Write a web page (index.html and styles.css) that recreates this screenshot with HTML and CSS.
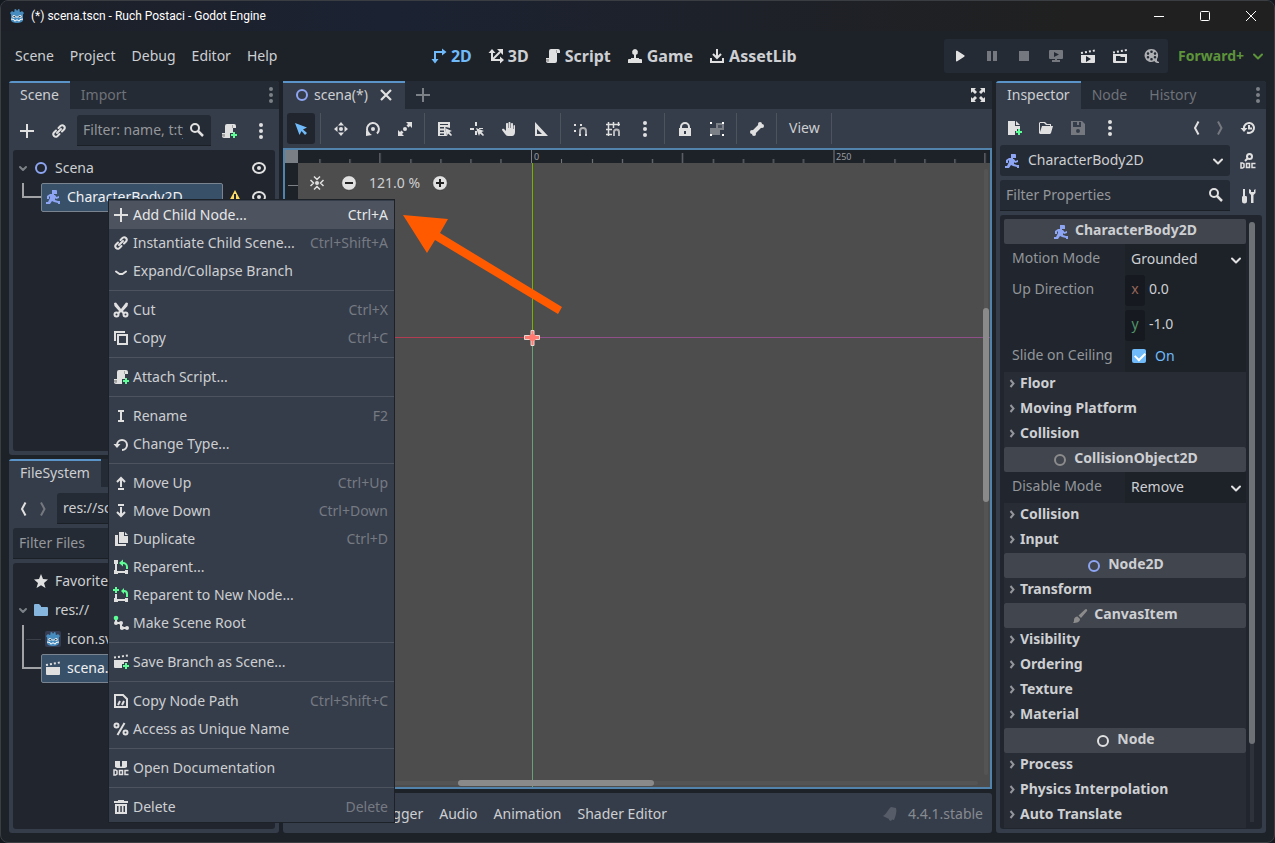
FILE: index.html
```
<!DOCTYPE html>
<html lang="en">

<head>
    <meta charset="UTF-8">
    <meta name="viewport" content="width=device-width, initial-scale=1.0">
    <title>(*) scena.tscn - Ruch Postaci - Godot Engine</title>
    <link rel="stylesheet" href="styles.css">
</head>

<body>
    <!-- Icon set -->
    <svg class="sprite" aria-hidden="true">
        <symbol id="godot" viewBox="0 0 16 16">
            <path fill="#478cbf" d="M1 5l2-2 1.500 1 1-.6L5.400 1.500 7 1l.7 1.600h.8L9.200 1l1.500.5-.1 1.900 1 .6L13 3l2 2-1 1.500V12c0 2-3 3-6 3s-6-1-6-3V6.500z" />
            <circle cx="5" cy="8.500" r="1.600" fill="#fff" /><circle cx="11" cy="8.500" r="1.600" fill="#fff" />
            <circle cx="5.200" cy="8.600" r=".9" fill="#414042" /><circle cx="10.800" cy="8.600" r=".9" fill="#414042" />
            <path fill="none" stroke="#fff" d="M8 8v2M2 11l3 .5.5 1.500h1l.5-1h2l.5 1h1l.5-1.500 3-.5" />
        </symbol>
        <symbol id="add" viewBox="0 0 16 16"><path fill="currentColor" d="M7 1v6H1v2h6v6h2V9h6V7H9V1z" /></symbol>
        <symbol id="link" viewBox="0 0 16 16"><path fill="none" stroke="currentColor" stroke-width="2" stroke-linecap="round" d="M6 10l4-4M7.500 5l2.200-2.200a2.500 2.500 0 0 1 3.500 3.500L11 8.500M8.500 11l-2.200 2.200a2.500 2.500 0 0 1-3.500-3.500L5 7.500" /></symbol>
        <symbol id="search" viewBox="0 0 16 16"><circle cx="6" cy="6" r="4" fill="none" stroke="currentColor" stroke-width="2" /><path stroke="currentColor" stroke-width="2.500" d="M9 9l5 5" /></symbol>
        <symbol id="script" viewBox="0 0 16 16"><path fill="currentColor" d="M6 1a2 2 0 0 0-2 2v7H1v3a2 2 0 0 0 2 2h7a2 2 0 0 0 2-2V5h3V3a2 2 0 0 0-2-2z" /><path fill="#00000045" d="M1 11h3v2a1 1 0 0 1-2 0H1zM11 2h1v3h-1z" /></symbol>
        <symbol id="script-add" viewBox="0 0 16 16"><path fill="currentColor" d="M6 1a2 2 0 0 0-2 2v7H1v3a2 2 0 0 0 2 2h6v-5h3V5h3V3a2 2 0 0 0-2-2z" /><path fill="#00000045" d="M1 11h3v2a1 1 0 0 1-2 0H1zM11 2h1v3h-1z" /><path fill="#5fff97" d="M12 9v2h-2v2h2v2h2v-2h2v-2h-2V9z" /></symbol>
        <symbol id="dots" viewBox="0 0 16 16"><g fill="currentColor"><circle cx="8" cy="2" r="2" /><circle cx="8" cy="8" r="2" /><circle cx="8" cy="14" r="2" /></g></symbol>
        <symbol id="ring" viewBox="0 0 16 16"><circle cx="8" cy="8" r="5" fill="none" stroke="currentColor" stroke-width="2" /></symbol>
        <symbol id="body2d" viewBox="0 0 16 16"><path fill="currentColor" d="M7 1h4a1 1 0 0 1 1 1v3H9v1h1l1.500 2L14 7v2l-3 1-1-1v2l3 1h2v3h-2v-1l-4-1-2-1-2 3H1v-2h2l2-4V7L4 8v2H2V7l3-2h2z" /></symbol>
        <symbol id="eye" viewBox="0 0 16 16"><ellipse cx="8" cy="8" rx="6" ry="5" fill="none" stroke="currentColor" stroke-width="2" /><circle cx="8" cy="8" r="2" fill="currentColor" /></symbol>
        <symbol id="warning" viewBox="0 0 16 16"><path fill="#ffdd65" d="M8 1l7 13H1z" /><path fill="#21262e" d="M7 5h2v5H7zM7 11h2v2H7z" /></symbol>
        <symbol id="down" viewBox="0 0 16 16"><path fill="none" stroke="currentColor" stroke-width="2" stroke-linecap="round" stroke-linejoin="round" d="M4 6.500l4 4 4-4" /></symbol>
        <symbol id="fold" viewBox="0 0 16 16"><path fill="none" stroke="currentColor" stroke-width="2" stroke-linecap="round" stroke-linejoin="round" d="M5 6l3 3 3-3" /></symbol>
        <symbol id="expand" viewBox="0 0 16 16"><path fill="none" stroke="currentColor" stroke-width="2" stroke-linecap="round" stroke-linejoin="round" d="M3 8.500l3.500 2.500h3L13 8.500" /></symbol>
        <symbol id="right" viewBox="0 0 16 16"><path fill="none" stroke="currentColor" stroke-width="2" d="M6.500 5l3 3.500-3 3.500" /></symbol>
        <symbol id="back" viewBox="0 0 16 16"><path fill="none" stroke="currentColor" stroke-width="2" d="M10.500 1.500L7 8l3.500 6.500" /></symbol>
        <symbol id="forward" viewBox="0 0 16 16"><path fill="none" stroke="currentColor" stroke-width="2" d="M6 1.500L9.500 8 6 14.500" /></symbol>
        <symbol id="close" viewBox="0 0 16 16"><path stroke="currentColor" stroke-width="2.200" d="M3 3l10 10M13 3L3 13" /></symbol>
        <symbol id="fullscreen" viewBox="0 0 16 16"><path fill="currentColor" d="M1 1h5L4.500 2.500 7 5 5 7 2.500 4.500 1 6zM15 1v5l-1.500-1.500L11 7 9 5l2.500-2.500L10 1zM1 15v-5l1.500 1.500L5 9l2 2-2.500 2.500L6 15zM15 15h-5l1.500-1.500L9 11l2-2 2.500 2.500L15 10z" /></symbol>
        <symbol id="ws2d" viewBox="0 0 16 16"><path fill="none" stroke="currentColor" stroke-width="2" d="M4 13V4h9" /><path fill="currentColor" d="M11 .5L15.500 4 11 7.500zM.5 11L4 15.500 7.500 11z" /></symbol>
        <symbol id="ws3d" viewBox="0 0 16 16"><path fill="none" stroke="currentColor" stroke-width="2" d="M4 4v8h9M4 12l8-8" /><path fill="currentColor" d="M.5 5L4 1l3.500 4zM12 8.500l4 3.500-4 3.500zM9 1h6v6z" /></symbol>
        <symbol id="game" viewBox="0 0 16 16"><path fill="currentColor" d="M8 1a3 3 0 0 1 1 5.800V10h3v1h2a1 1 0 0 1 1 1v3H1v-3a1 1 0 0 1 1-1h2v-1h3V6.800A3 3 0 0 1 8 1z" /></symbol>
        <symbol id="assetlib" viewBox="0 0 16 16"><path fill="none" stroke="currentColor" stroke-width="2" d="M8 1v9M4 6l4 4 4-4M2 10v4h12v-4" /></symbol>
        <symbol id="play" viewBox="0 0 16 16"><path fill="currentColor" d="M4 3.500c0-1 .6-1 1.200-.7l7 4.500c.6.400.6 1 0 1.400l-7 4.500c-.6.400-1.200.2-1.200-.7z" /></symbol>
        <symbol id="pause" viewBox="0 0 16 16"><path fill="currentColor" d="M3 3h4v10H3zM9 3h4v10H9z" /></symbol>
        <symbol id="stop" viewBox="0 0 16 16"><path fill="currentColor" d="M3 3h10v10H3z" /></symbol>
        <symbol id="remote" viewBox="0 0 16 16"><path fill="currentColor" fill-rule="evenodd" d="M2 2h12a1 1 0 0 1 1 1v7a1 1 0 0 1-1 1H9v1h3v2H4v-2h3v-1H2a1 1 0 0 1-1-1V3a1 1 0 0 1 1-1zm4 2v5l5-2.500z" /></symbol>
        <symbol id="clap-play" viewBox="0 0 16 16"><path fill="currentColor" fill-rule="evenodd" d="M1 7h14v7a1 1 0 0 1-1 1H2a1 1 0 0 1-1-1zm5 1v6l5-3z" /><path fill="none" stroke="currentColor" stroke-width="2" stroke-dasharray="2 2" d="M1 5l14-2.500" /></symbol>
        <symbol id="clap-file" viewBox="0 0 16 16"><path fill="currentColor" fill-rule="evenodd" d="M1 6h14v8a1 1 0 0 1-1 1H2a1 1 0 0 1-1-1zm3 2v5h9V9H9L8 8z" /><path fill="none" stroke="currentColor" stroke-width="2" stroke-dasharray="2 2" d="M1 4.500L15 2" /></symbol>
        <symbol id="clap" viewBox="0 0 16 16"><path fill="currentColor" d="M1 7h14v7a1 1 0 0 1-1 1H2a1 1 0 0 1-1-1z" /><path fill="none" stroke="currentColor" stroke-width="2" stroke-dasharray="2 2" d="M1 5l14-2.500" /></symbol>
        <symbol id="clap-add" viewBox="0 0 16 16"><path fill="currentColor" d="M1 6h14v2h-4v2H9v4H2a1 1 0 0 1-1-1z" /><path fill="none" stroke="currentColor" stroke-width="2" stroke-dasharray="2 2" d="M1 3.500L15 1.500" /><path fill="#5fff97" d="M12 9v2h-2v2h2v2h2v-2h2v-2h-2V9z" /></symbol>
        <symbol id="movie" viewBox="0 0 16 16"><path fill="currentColor" fill-rule="evenodd" d="M7.500 1a6.500 6.500 0 0 1 5.500 10v2l2 1v1h-2l-2-1-.5-1A6.500 6.500 0 1 1 7.500 1zm0 1.500a1.300 1.300 0 1 0 0 2.600 1.300 1.300 0 0 0 0-2.600zm0 7.400a1.300 1.300 0 1 0 0 2.600 1.300 1.300 0 0 0 0-2.600zM4 4.300a1.300 1.300 0 1 0 0 2.600 1.300 1.300 0 0 0 0-2.600zm7 0a1.300 1.300 0 1 0 0 2.600 1.300 1.300 0 0 0 0-2.600zM4 8a1.300 1.300 0 1 0 0 2.600A1.300 1.300 0 0 0 4 8zm7 0a1.300 1.300 0 1 0 0 2.600A1.300 1.300 0 0 0 11 8z" /></symbol>
        <symbol id="select" viewBox="0 0 16 16"><path fill="currentColor" d="M2 2l4.500 12 2-4 3.500 4 2-2-4-3.500 4-2z" /></symbol>
        <symbol id="move" viewBox="0 0 16 16"><path fill="currentColor" d="M8 1l3 3.500H5zM8 15l-3-3.500h6zM1 8l3.500-3v6zM15 8l-3.500 3V5z" /><circle cx="8" cy="8" r="2" fill="currentColor" /></symbol>
        <symbol id="rotate" viewBox="0 0 16 16"><path fill="none" stroke="currentColor" stroke-width="2" d="M4.500 13A6 6 0 1 1 12 12.500" /><path fill="currentColor" d="M1 15V9.500L7 14z" /><circle cx="8" cy="8" r="2" fill="currentColor" /></symbol>
        <symbol id="scale" viewBox="0 0 16 16"><path fill="currentColor" d="M9 1h6v6l-2-2-1.500 1.500-2-2L11 3zM7 15H1V9l2 2 1.500-1.500 2 2L5 13z" /><circle cx="8" cy="8" r="2" fill="currentColor" /></symbol>
        <symbol id="list-select" viewBox="0 0 16 16"><path fill="currentColor" fill-rule="evenodd" d="M1 1h12v6l-4-1-1 1 2 8H1zm2 2v1h8V3zm0 3v1.500h4V6zm0 3.500V11h4V9.500zm0 3V14h4v-1.500z" /><path fill="currentColor" d="M8 7l7 3-2.500 1 2.500 3-1 1-3-2.500-1 2.500z" /></symbol>
        <symbol id="pivot" viewBox="0 0 16 16"><path fill="currentColor" d="M6 1h2v4H6zM1 7h4v2H1zM10 7h4v1h-4zM6 10h2v4H6zM7 7l8 3-2.500 1 2.500 3-1 1-3-2.500L10 15z" /></symbol>
        <symbol id="hand" viewBox="0 0 16 16"><path fill="currentColor" d="M6 2c1 0 1 .5 1 1v4h.5V2c0-1.300 2-1.300 2 0v5h.5V3c0-1.300 2-1.300 2 0v5h.5V5c0-1.300 1.500-1.300 1.500 0v6c0 2-1 4-3 4H7c-1.500 0-2-1-3-2L1 9c0-1.500 1.500-1.500 2-1l2 2V3c0-.5.300-1 1-1z" /></symbol>
        <symbol id="rulertool" viewBox="0 0 16 16"><path fill="currentColor" fill-rule="evenodd" d="M2 1l13 14H2zm2 7v5h5z" /></symbol>
        <symbol id="snap" viewBox="0 0 16 16"><path fill="currentColor" d="M1 3h2v2H1zM7 3h2v2H7zM1 9h2v2H1zM6 13h2v2H6zM12 13h2v2h-2z" /><path fill="none" stroke="#adaeb1" stroke-width="2" d="M7 13v-3a3 3 0 0 1 6 0v3" /></symbol>
        <symbol id="grid" viewBox="0 0 16 16"><path fill="none" stroke="currentColor" d="M3.500 1v14M8.500 1v6M13.500 1v4M1 3.500h14M1 8.500h6M1 13.500h6" stroke-width="1.500" /><path fill="none" stroke="#b5b6b8" stroke-width="2" d="M9 15v-4a2.500 2.500 0 0 1 5 0v4" /></symbol>
        <symbol id="lock" viewBox="0 0 16 16"><path fill="none" stroke="currentColor" stroke-width="2" d="M4 8V6a4 4 0 0 1 8 0v2" /><path fill="currentColor" fill-rule="evenodd" d="M2 7h12v8H2zm5 3v3h2v-3z" /></symbol>
        <symbol id="group" viewBox="0 0 16 16"><path fill="#7c8087" d="M7 2h8v7h-4v5H1V7h6z" /><path fill="#4b515d" d="M9 4h4v3H9z" /><path fill="#fff" d="M1 1h2v2H1zM13 1h2v2h-2zM1 13h2v2H1zM13 13h2v2h-2z" /></symbol>
        <symbol id="bone" viewBox="0 0 16 16"><path stroke="currentColor" stroke-width="4" d="M4.500 11.500l7-7" /><g fill="currentColor"><circle cx="3" cy="11" r="2" /><circle cx="5" cy="13" r="2" /><circle cx="11" cy="3" r="2" /><circle cx="13" cy="5" r="2" /></g></symbol>
        <symbol id="centerview" viewBox="0 0 16 16"><circle cx="8" cy="8" r="2" fill="currentColor" /><path fill="none" stroke="currentColor" stroke-width="1.500" d="M5 1.500l3 3 3-3M5 14.500l3-3 3 3M1.500 5l3 3-3 3M14.500 5l-3 3 3 3" /></symbol>
        <symbol id="zoomless" viewBox="0 0 16 16"><circle cx="8" cy="8" r="7.300" fill="#e0e0e0" stroke="#333" stroke-width=".6" /><path fill="#222" d="M4 7h8v2H4z" /></symbol>
        <symbol id="zoommore" viewBox="0 0 16 16"><circle cx="8" cy="8" r="7.300" fill="#e0e0e0" stroke="#333" stroke-width=".6" /><path fill="#222" d="M7 4h2v3h3v2H9v3H7V9H4V7h3z" /></symbol>
        <symbol id="filenew" viewBox="0 0 16 16"><path fill="currentColor" d="M2 1h7v5h5v3h-3v2H9v4H2zM10 1l4 4h-4z" /><path fill="#5fff97" d="M12 9v2h-2v2h2v2h2v-2h2v-2h-2V9z" /></symbol>
        <symbol id="load" viewBox="0 0 16 16"><path fill="currentColor" d="M1 3l1-1h5l2 2h4v2h-1V5H8L6 3H2v9l2-6h11l-2 7-1 1H2l-1-1z" /></symbol>
        <symbol id="save" viewBox="0 0 16 16"><path fill="currentColor" fill-rule="evenodd" d="M1 1h11l3 3v11H1zm2 1v5h8V2H9v3H7V2zm5 7a2 2 0 1 0 0 4 2 2 0 0 0 0-4z" /></symbol>
        <symbol id="history" viewBox="0 0 16 16"><path fill="none" stroke="currentColor" stroke-width="2" d="M4 8a5 5 0 1 1 3 4.500M9 5v3.500h3" /><path fill="currentColor" d="M.5 8h7L4 12z" /></symbol>
        <symbol id="docsearch" viewBox="0 0 16 16"><circle cx="9.500" cy="3.500" r="2.500" fill="none" stroke="currentColor" stroke-width="2" /><path stroke="currentColor" stroke-width="2" d="M7.500 5.500L5 8" /><path fill="none" stroke="currentColor" stroke-width="1.500" d="M1 10h1.500l1.500 1v3l-1.500 1H1zM6.500 10.500h3v4h-3zM15.500 10.500H12v4h3.500" /></symbol>
        <symbol id="tools" viewBox="0 0 16 16"><path fill="currentColor" d="M3 1h2v7h1c1 0 1 1 1 2v3a2.500 2.500 0 0 1-5 0v-3c0-1 0-2 1-2zM9 1v4l2 2v8h2.500V7l2-2V1L14 2v2h-3V2z" /></symbol>
        <symbol id="brush" viewBox="0 0 16 16"><path fill="currentColor" d="M14 1c1 0 1.500 1 1 2L9 10 6.500 7.500 13 1.500zM5.500 8.500L8 11c0 3-3 4-7 4 1-1 1-2 1-3 0-2 1.500-3.500 3.500-3.500z" /></symbol>
        <symbol id="cut" viewBox="0 0 16 16"><path fill="currentColor" d="M1 1l2-.5L8 7l5-6.500 2 .5-.5 3L10 9l2 2-2 1-2-2-2 2-2-1 2-2L1.500 4z" /><g fill="none" stroke="currentColor" stroke-width="2"><circle cx="3.500" cy="12.500" r="2" /><circle cx="12.500" cy="12.500" r="2" /></g></symbol>
        <symbol id="copy" viewBox="0 0 16 16"><path fill="none" stroke="currentColor" stroke-width="2" d="M2 11V2h10M5 5h9v9H5z" /></symbol>
        <symbol id="rename" viewBox="0 0 16 16"><path fill="currentColor" d="M5 2h6v2H9v8h2v2H5v-2h2V4H5z" /></symbol>
        <symbol id="reload" viewBox="0 0 16 16"><path fill="none" stroke="currentColor" stroke-width="2" d="M4 9a5 5 0 1 1 5 5" /><path fill="currentColor" d="M.5 8h7L4 12z" /></symbol>
        <symbol id="moveup" viewBox="0 0 16 16"><path fill="none" stroke="currentColor" stroke-width="2" d="M8 12V3M4 7l4-4 4 4M5 14h6" /></symbol>
        <symbol id="movedown" viewBox="0 0 16 16"><path fill="none" stroke="currentColor" stroke-width="2" d="M8 4v9M4 9l4 4 4-4M5 2h6" /></symbol>
        <symbol id="duplicate" viewBox="0 0 16 16"><path fill="currentColor" d="M6 1h5v4h4v7H6zM12 1l3 3h-3zM2 4h3v9h8v2H2z" /></symbol>
        <symbol id="reparent" viewBox="0 0 16 16"><path fill="currentColor" d="M1 1h4v4H4v7h8v-1h3v4h-3v-1H5v1H1v-4h1V5H1z" /><path fill="none" stroke="#5fff97" stroke-width="2" d="M9 4h1a4 4 0 0 1 4 4v2" /><path fill="#5fff97" d="M10 .5v7L6 4z" /></symbol>
        <symbol id="reparent-new" viewBox="0 0 16 16"><path fill="currentColor" d="M2 7h2v5h8v-1h3v4h-3v-1H5v1H1v-4h1z" /><path fill="none" stroke="#5fff97" stroke-width="2" d="M11 4a3 3 0 0 1 3 3v3" /><path fill="#5fff97" d="M2 0h2v2h2v2H4v2H2V4H0V2h2zM11 1v6L8 4z" /></symbol>
        <symbol id="root" viewBox="0 0 16 16"><path fill="none" stroke="currentColor" stroke-width="2" d="M3 4v4h5v5h5" /><g fill="currentColor"><circle cx="3" cy="8" r="2" /><circle cx="8" cy="8" r="2" /><circle cx="9" cy="13" r="2" /><circle cx="14" cy="13" r="2" /></g><circle cx="3" cy="3" r="2.300" fill="#5fff97" /></symbol>
        <symbol id="path" viewBox="0 0 16 16"><path fill="none" stroke="currentColor" stroke-width="2" d="M2 2h8l4 4v8H2zM7 8l-2 4M11 8l-2 4" /></symbol>
        <symbol id="percent" viewBox="0 0 16 16"><g fill="none" stroke="currentColor" stroke-width="2"><circle cx="3.500" cy="4.500" r="2" /><circle cx="12.500" cy="11.500" r="2" /><path d="M11.500 2l-7 12" /></g></symbol>
        <symbol id="docs" viewBox="0 0 16 16"><path fill="currentColor" d="M2 1h5v5l1 1 1-1V1h5v6l-2 1H4L2 7z" /><path fill="none" stroke="currentColor" stroke-width="1.500" d="M1 10h1.500l1.500 1v3l-1.500 1H1zM6.500 10.500h3v4h-3zM15.500 10.500H12v4h3.500" /></symbol>
        <symbol id="trash" viewBox="0 0 16 16"><path fill="currentColor" fill-rule="evenodd" d="M5 1h6v1h4v2H1V2h4zM2 5h12v10H2zm2 2v6h1.500V7zm3.300 0v6h1.500V7zm3.200 0v6H12V7z" /></symbol>
        <symbol id="star" viewBox="0 0 16 16"><path fill="currentColor" d="M8 1l2 5 5 .5-4 3.500 1.500 5L8 12.200 3.500 15 5 10 1 6.500 6 6z" /></symbol>
        <symbol id="folder" viewBox="0 0 16 16"><path fill="currentColor" d="M1 3a1 1 0 0 1 1-1h4l2 2v1h6a1 1 0 0 1 1 1v7a1 1 0 0 1-1 1H2a1 1 0 0 1-1-1z" /></symbol>
        <symbol id="bell" viewBox="0 0 16 16"><path fill="currentColor" d="M9 1l5 1c1 3 0 7-2 12l-2-.5-1 1.500-2-1v-1l-6-3C5 8 6 3 9 1z" /></symbol>
    </svg>

    <div class="window">
        <header class="titlebar">
            <svg class="icon"><use href="#godot" /></svg>
            <h1>(*) scena.tscn - Ruch Postaci - Godot Engine</h1>
            <button class="sys" aria-label="Minimize"><svg viewBox="0 0 12 12"><path d="M1 6.500h10" /></svg></button>
            <button class="sys" aria-label="Maximize"><svg viewBox="0 0 12 12"><rect x="1.500" y="1.500" width="9" height="9" rx="1" /></svg></button>
            <button class="sys" aria-label="Close"><svg viewBox="0 0 12 12"><path d="M1 1l10 10M11 1L1 11" /></svg></button>
        </header>

        <div class="menubar">
            <nav class="menus">
                <button>Scene</button>
                <button>Project</button>
                <button>Debug</button>
                <button>Editor</button>
                <button>Help</button>
            </nav>
            <nav class="screens">
                <button class="active"><svg class="icon"><use href="#ws2d" /></svg>2D</button>
                <button><svg class="icon"><use href="#ws3d" /></svg>3D</button>
                <button><svg class="icon"><use href="#script" /></svg>Script</button>
                <button><svg class="icon"><use href="#game" /></svg>Game</button>
                <button><svg class="icon"><use href="#assetlib" /></svg>AssetLib</button>
            </nav>
            <div class="runbar">
                <button aria-label="Run project"><svg class="icon"><use href="#play" /></svg></button>
                <button class="dim" aria-label="Pause"><svg class="icon"><use href="#pause" /></svg></button>
                <button class="dim" aria-label="Stop"><svg class="icon"><use href="#stop" /></svg></button>
                <button class="dim" aria-label="Remote deploy"><svg class="icon"><use href="#remote" /></svg></button>
                <button aria-label="Run current scene"><svg class="icon"><use href="#clap-play" /></svg></button>
                <button aria-label="Run specific scene"><svg class="icon"><use href="#clap-file" /></svg></button>
                <button class="soft" aria-label="Movie maker"><svg class="icon"><use href="#movie" /></svg></button>
            </div>
            <button class="renderer">Forward+<svg class="icon"><use href="#down" /></svg></button>
        </div>

        <main class="workspace">
            <div class="column">
                <section class="dock">
                    <div class="tabs">
                        <button class="tab active">Scene</button>
                        <button class="tab">Import</button>
                        <button class="more" aria-label="Dock options"><svg class="icon"><use href="#dots" /></svg></button>
                    </div>
                    <div class="dock-body">
                        <div class="row">
                            <button class="tool" aria-label="Add node"><svg class="icon"><use href="#add" /></svg></button>
                            <button class="tool" aria-label="Instantiate scene"><svg class="icon"><use href="#link" /></svg></button>
                            <div class="field">
                                <input type="text" aria-label="Filter nodes" placeholder="Filter: name, t:type">
                                <svg class="icon"><use href="#search" /></svg>
                            </div>
                            <button class="tool" aria-label="Attach script"><svg class="icon"><use href="#script-add" /></svg></button>
                            <button class="tool" aria-label="More"><svg class="icon"><use href="#dots" /></svg></button>
                        </div>
                        <ul class="tree">
                            <li>
                                <svg class="icon fold"><use href="#fold" /></svg>
                                <span class="item"><svg class="icon node2d"><use href="#ring" /></svg>Scena</span>
                                <button class="mini" aria-label="Toggle visibility"><svg class="icon"><use href="#eye" /></svg></button>
                            </li>
                            <li>
                                <span class="guide"></span>
                                <span class="item selected"><svg class="icon node2d"><use href="#body2d" /></svg>CharacterBody2D</span>
                                <button class="mini" aria-label="Warning"><svg class="icon"><use href="#warning" /></svg></button>
                                <button class="mini" aria-label="Toggle visibility"><svg class="icon"><use href="#eye" /></svg></button>
                            </li>
                        </ul>
                    </div>
                </section>

                <section class="dock">
                    <div class="tabs">
                        <button class="tab active">FileSystem</button>
                    </div>
                    <div class="dock-body">
                        <div class="row">
                            <div class="nav">
                                <button class="arrow" aria-label="Back"><svg class="icon"><use href="#back" /></svg></button>
                                <button class="arrow dim" aria-label="Forward"><svg class="icon"><use href="#forward" /></svg></button>
                            </div>
                            <div class="field"><input type="text" aria-label="Path" value="res://scena.tscn"></div>
                        </div>
                        <div class="row">
                            <div class="field"><input type="text" aria-label="Filter files" placeholder="Filter Files"></div>
                        </div>
                        <ul class="tree">
                            <li class="indent"><span class="item"><svg class="icon"><use href="#star" /></svg>Favorites:</span></li>
                            <li>
                                <svg class="icon fold"><use href="#fold" /></svg>
                                <span class="item"><svg class="icon folder"><use href="#folder" /></svg>res://</span>
                            </li>
                            <li>
                                <span class="guide through"></span>
                                <span class="item child"><svg class="icon thumb"><use href="#godot" /></svg>icon.svg</span>
                            </li>
                            <li>
                                <span class="guide"></span>
                                <span class="item selected"><svg class="icon"><use href="#clap" /></svg>scena.tscn</span>
                            </li>
                        </ul>
                    </div>
                </section>
            </div>

            <div class="column center">
                <section class="editor">
                    <div class="tabs">
                        <button class="tab scene-tab active"><svg class="icon node2d"><use href="#ring" /></svg>scena(*)<svg class="icon x"><use href="#close" /></svg></button>
                        <button class="new-tab" aria-label="New scene"><svg class="icon"><use href="#add" /></svg></button>
                        <button class="more expand" aria-label="Distraction free mode"><svg class="icon"><use href="#fullscreen" /></svg></button>
                    </div>
                    <div class="tools">
                        <button class="tool pressed" aria-label="Select"><svg class="icon"><use href="#select" /></svg></button>
                        <i></i>
                        <button class="tool" aria-label="Move"><svg class="icon"><use href="#move" /></svg></button>
                        <button class="tool" aria-label="Rotate"><svg class="icon"><use href="#rotate" /></svg></button>
                        <button class="tool" aria-label="Scale"><svg class="icon"><use href="#scale" /></svg></button>
                        <i></i>
                        <button class="tool" aria-label="List select"><svg class="icon"><use href="#list-select" /></svg></button>
                        <button class="tool" aria-label="Pivot"><svg class="icon"><use href="#pivot" /></svg></button>
                        <button class="tool" aria-label="Pan"><svg class="icon"><use href="#hand" /></svg></button>
                        <button class="tool" aria-label="Ruler"><svg class="icon"><use href="#rulertool" /></svg></button>
                        <i></i>
                        <button class="tool" aria-label="Smart snap"><svg class="icon"><use href="#snap" /></svg></button>
                        <button class="tool" aria-label="Grid snap"><svg class="icon"><use href="#grid" /></svg></button>
                        <button class="tool" aria-label="Snap options"><svg class="icon"><use href="#dots" /></svg></button>
                        <i></i>
                        <button class="tool" aria-label="Lock"><svg class="icon"><use href="#lock" /></svg></button>
                        <button class="tool" aria-label="Group"><svg class="icon"><use href="#group" /></svg></button>
                        <i></i>
                        <button class="tool" aria-label="Skeleton"><svg class="icon"><use href="#bone" /></svg></button>
                        <i></i>
                        <button class="view">View</button>
                        <i></i>
                    </div>
                    <div class="viewport">
                        <svg class="canvas" aria-hidden="true">
                            <defs>
                                <pattern id="ticks" patternUnits="userSpaceOnUse" x="246" y="0" width="302.500" height="13">
                                    <path stroke="#7d8084" d="M.5 0v13M30.500 9v4M61.500 9v4M91.500 9v4M121.500 9v4M151.500 3v10M182.500 9v4M212.500 9v4M242.500 9v4M272.500 9v4" />
                                </pattern>
                            </defs>
                            <rect width="100%" height="13" fill="#1d2229" />
                            <rect width="13" height="100%" fill="#1d2229" />
                            <rect width="100%" height="13" fill="url(#ticks)" />
                            <rect width="13" height="13" fill="#7a7f86" />
                            <path stroke="#7d8084" d="M3 35.500h10" />
                            <text x="249" y="10">0</text>
                            <text x="551" y="10">250</text>
                            <path stroke="#b23c52" d="M13 187.500h234" />
                            <path stroke="#8f4f88" d="M247 187.500h3000" />
                            <path stroke="#78b000" d="M247.500 13v174" />
                            <path stroke="#6aa078" d="M247.500 188v3000" />
                            <path fill="#ff7a70" stroke="#e8d8d4" d="M246 180.500h3v5h5.500v4H249v6h-3v-6h-6.500v-4h6.500z" />
                            <circle cx="247.500" cy="187.500" r="3.500" fill="#ff7a70" />
                            <path fill="#ff5a00" d="M118 65l45 4-8 14 122 74-4 7-123-74-8 13z" />
                        </svg>
                        <div class="zoom">
                            <button aria-label="Center view"><svg class="icon"><use href="#centerview" /></svg></button>
                            <button aria-label="Zoom out"><svg class="icon"><use href="#zoomless" /></svg></button>
                            <button class="percent">121.0 %</button>
                            <button aria-label="Zoom in"><svg class="icon"><use href="#zoommore" /></svg></button>
                        </div>
                        <div class="vscroll"><span></span></div>
                        <div class="hscroll"><span></span></div>
                    </div>
                </section>
                <footer class="bottom">
                    <button>Output</button>
                    <button>Debugger</button>
                    <button>Audio</button>
                    <button>Animation</button>
                    <button>Shader Editor</button>
                    <span class="version"><svg class="icon"><use href="#bell" /></svg>4.4.1.stable</span>
                </footer>
            </div>

            <div class="column">
                <section class="dock inspector">
                    <div class="tabs">
                        <button class="tab active">Inspector</button>
                        <button class="tab">Node</button>
                        <button class="tab">History</button>
                        <button class="more" aria-label="Dock options"><svg class="icon"><use href="#dots" /></svg></button>
                    </div>
                    <div class="dock-body">
                        <div class="row short">
                            <button class="tool" aria-label="New resource"><svg class="icon"><use href="#filenew" /></svg></button>
                            <button class="tool" aria-label="Load resource"><svg class="icon"><use href="#load" /></svg></button>
                            <button class="tool dim" aria-label="Save resource"><svg class="icon"><use href="#save" /></svg></button>
                            <button class="tool" aria-label="More"><svg class="icon"><use href="#dots" /></svg></button>
                            <span class="space"></span>
                            <button class="arrow" aria-label="Previous"><svg class="icon"><use href="#back" /></svg></button>
                            <button class="arrow dim" aria-label="Next"><svg class="icon"><use href="#forward" /></svg></button>
                            <button class="tool" aria-label="History"><svg class="icon"><use href="#history" /></svg></button>
                        </div>
                        <div class="row">
                            <div class="field object">
                                <svg class="icon node2d"><use href="#body2d" /></svg>
                                <select aria-label="Edited object"><option>CharacterBody2D</option></select>
                                <svg class="icon"><use href="#down" /></svg>
                            </div>
                            <button class="tool" aria-label="Open documentation"><svg class="icon"><use href="#docsearch" /></svg></button>
                        </div>
                        <div class="row">
                            <div class="field">
                                <input type="text" aria-label="Filter properties" placeholder="Filter Properties">
                                <svg class="icon"><use href="#search" /></svg>
                            </div>
                            <button class="tool" aria-label="Manage properties"><svg class="icon"><use href="#tools" /></svg></button>
                        </div>
                        <div class="props">
                            <div class="props-list">
                                <h2><svg class="icon node2d"><use href="#body2d" /></svg>CharacterBody2D</h2>
                                <div class="prop">
                                    <label for="motion">Motion Mode</label>
                                    <div class="value">
                                        <select id="motion"><option>Grounded</option></select>
                                        <svg class="icon"><use href="#down" /></svg>
                                    </div>
                                </div>
                                <div class="prop">
                                    <label for="upx">Up Direction</label>
                                    <div class="vector">
                                        <div class="value"><label class="axis x" for="upx">x</label><input id="upx" type="text" value="0.0"></div>
                                        <div class="value"><label class="axis y" for="upy">y</label><input id="upy" type="text" value="-1.0"></div>
                                    </div>
                                </div>
                                <div class="prop">
                                    <label for="slide">Slide on Ceiling</label>
                                    <div class="value check"><input id="slide" type="checkbox" checked><label for="slide">On</label></div>
                                </div>
                                <button class="group"><svg class="icon"><use href="#right" /></svg>Floor</button>
                                <button class="group"><svg class="icon"><use href="#right" /></svg>Moving Platform</button>
                                <button class="group"><svg class="icon"><use href="#right" /></svg>Collision</button>
                                <h2><svg class="icon grey"><use href="#ring" /></svg>CollisionObject2D</h2>
                                <div class="prop">
                                    <label for="disable">Disable Mode</label>
                                    <div class="value">
                                        <select id="disable"><option>Remove</option></select>
                                        <svg class="icon"><use href="#down" /></svg>
                                    </div>
                                </div>
                                <button class="group"><svg class="icon"><use href="#right" /></svg>Collision</button>
                                <button class="group"><svg class="icon"><use href="#right" /></svg>Input</button>
                                <h2><svg class="icon node2d"><use href="#ring" /></svg>Node2D</h2>
                                <button class="group"><svg class="icon"><use href="#right" /></svg>Transform</button>
                                <h2><svg class="icon grey"><use href="#brush" /></svg>CanvasItem</h2>
                                <button class="group"><svg class="icon"><use href="#right" /></svg>Visibility</button>
                                <button class="group"><svg class="icon"><use href="#right" /></svg>Ordering</button>
                                <button class="group"><svg class="icon"><use href="#right" /></svg>Texture</button>
                                <button class="group"><svg class="icon"><use href="#right" /></svg>Material</button>
                                <h2><svg class="icon"><use href="#ring" /></svg>Node</h2>
                                <button class="group"><svg class="icon"><use href="#right" /></svg>Process</button>
                                <button class="group"><svg class="icon"><use href="#right" /></svg>Physics Interpolation</button>
                                <button class="group"><svg class="icon"><use href="#right" /></svg>Auto Translate</button>
                            </div>
                            <div class="scrollbar"><span></span></div>
                        </div>
                    </div>
                </section>
            </div>
        </main>

        <!-- Node context menu -->
        <div class="popup" role="menu">
            <button class="hover"><svg class="icon"><use href="#add" /></svg>Add Child Node...<kbd>Ctrl+A</kbd></button>
            <button><svg class="icon"><use href="#link" /></svg>Instantiate Child Scene...<kbd>Ctrl+Shift+A</kbd></button>
            <button><svg class="icon"><use href="#expand" /></svg>Expand/Collapse Branch</button>
            <hr>
            <button><svg class="icon"><use href="#cut" /></svg>Cut<kbd>Ctrl+X</kbd></button>
            <button><svg class="icon"><use href="#copy" /></svg>Copy<kbd>Ctrl+C</kbd></button>
            <hr>
            <button><svg class="icon"><use href="#script-add" /></svg>Attach Script...</button>
            <hr>
            <button><svg class="icon"><use href="#rename" /></svg>Rename<kbd>F2</kbd></button>
            <button><svg class="icon"><use href="#reload" /></svg>Change Type...</button>
            <hr>
            <button><svg class="icon"><use href="#moveup" /></svg>Move Up<kbd>Ctrl+Up</kbd></button>
            <button><svg class="icon"><use href="#movedown" /></svg>Move Down<kbd>Ctrl+Down</kbd></button>
            <button><svg class="icon"><use href="#duplicate" /></svg>Duplicate<kbd>Ctrl+D</kbd></button>
            <button><svg class="icon"><use href="#reparent" /></svg>Reparent...</button>
            <button><svg class="icon"><use href="#reparent-new" /></svg>Reparent to New Node...</button>
            <button><svg class="icon"><use href="#root" /></svg>Make Scene Root</button>
            <hr>
            <button><svg class="icon"><use href="#clap-add" /></svg>Save Branch as Scene...</button>
            <hr>
            <button><svg class="icon"><use href="#path" /></svg>Copy Node Path<kbd>Ctrl+Shift+C</kbd></button>
            <button><svg class="icon"><use href="#percent" /></svg>Access as Unique Name</button>
            <hr>
            <button><svg class="icon"><use href="#docs" /></svg>Open Documentation</button>
            <hr>
            <button><svg class="icon"><use href="#trash" /></svg>Delete<kbd>Delete</kbd></button>
        </div>
    </div>
</body>

</html>
```
FILE: styles.css
```
/* Reset */
* {
    margin: 0;
    padding: 0;
    box-sizing: border-box;
}

html,
body {
    height: 100%;
    overflow: hidden;
}

body {
    background-color: #14181f;
    color: #cdcfd2;
    font-family: "Noto Sans", "Open Sans", sans-serif;
    font-size: 14px;
    line-height: 20px;
}

button,
input,
select {
    border: 0;
    outline: 0;
    background: none;
    color: inherit;
    font: inherit;
    white-space: nowrap;
}

select {
    appearance: none;
}

ul {
    list-style: none;
}

.sprite {
    position: absolute;
    width: 0;
    height: 0;
}

.icon {
    display: block;
    flex: none;
    width: 16px;
    height: 16px;
    color: #e0e0e0;
}

.node2d {
    color: #8da5f3;
}

.grey {
    color: #8c8c8c;
}

.dim .icon {
    color: #75797f;
}

.soft .icon {
    color: #adafb2;
}

/* Window */
.window {
    position: relative;
    display: flex;
    flex-direction: column;
    height: 100%;
    border: 1px solid #3a3d42;
    border-radius: 8px;
    background-color: #1d2229;
    overflow: hidden;
}

.titlebar {
    display: flex;
    flex: none;
    align-items: center;
    height: 30px;
    padding-left: 8px;
    background: linear-gradient(90deg, #1d2027, #1b2232 30%, #202020 85%);
}

.titlebar h1 {
    flex: 1;
    padding-left: 6px;
    color: #fff;
    font-family: Roboto, "Open Sans", sans-serif;
    font-size: 12px;
    font-weight: 400;
}

.sys {
    display: grid;
    place-items: center;
    width: 46px;
    height: 30px;
}

.sys svg {
    width: 12px;
    height: 12px;
    fill: none;
    stroke: #fff;
}

/* Top menu */
.menubar {
    display: flex;
    flex: none;
    align-items: center;
    height: 50px;
    padding: 0 8px;
}

.menus,
.screens {
    display: flex;
    gap: 4px;
}

.menus button,
.screens button {
    padding: 0 6px;
}

.screens {
    flex: 1;
    justify-content: center;
}

.screens button {
    display: flex;
    align-items: center;
    gap: 4px;
    font-size: 16px;
    font-weight: 700;
}

.screens .active,
.screens .active .icon {
    color: #70bafa;
}

.runbar {
    display: flex;
    height: 34px;
    border-radius: 3px;
    background-color: #252b34;
}

.runbar button {
    display: grid;
    place-items: center;
    width: 32px;
}

.renderer {
    display: flex;
    align-items: center;
    gap: 6px;
    padding-left: 10px;
    color: #5d943a;
    font-weight: 700;
}

.renderer .icon {
    color: #5d943a;
}

/* Columns */
.workspace {
    display: grid;
    flex: 1;
    grid-template-columns: 270px minmax(0, 1fr) 270px;
    gap: 4px;
    min-height: 0;
    padding: 0 8px 9px;
}

.column {
    display: flex;
    flex-direction: column;
    gap: 4px;
    min-width: 0;
    min-height: 0;
}

.dock {
    display: flex;
    flex: 1;
    flex-direction: column;
    min-height: 0;
    border-radius: 3px;
    background-color: #363d4a;
    overflow: hidden;
}

.tabs {
    display: flex;
    flex: none;
    height: 28px;
    background-color: #252b34;
}

.tab {
    padding: 0 11px 2px;
    border-top: 2px solid transparent;
    color: #6e7279;
}

.tab.active {
    border-top-color: #5b94c8;
    background-color: #363d4a;
    color: #cdcfd2;
}

.more {
    margin-left: auto;
    padding: 0;
}

.more .icon {
    color: #7c8087;
}

.dock-body {
    display: flex;
    flex: 1;
    flex-direction: column;
    gap: 4px;
    min-height: 0;
    padding: 6px 4px 4px;
}

.row {
    display: flex;
    flex: none;
    gap: 4px;
    height: 31px;
}

.nav {
    display: flex;
}

.tool,
.arrow,
.mini {
    display: grid;
    flex: none;
    place-items: center;
    width: 28px;
}

.arrow {
    width: 20px;
}

.mini {
    width: 24px;
    padding-bottom: 1px;
}

.field {
    display: flex;
    flex: 1;
    align-items: center;
    min-width: 0;
    padding: 0 6px;
    border-bottom: 1px solid #1b1f26;
    border-radius: 3px 3px 0 0;
    background-color: #252b34;
}

.field input,
.field select {
    flex: 1;
    width: 0;
    min-width: 0;
}

.field input + .icon {
    margin-left: 6px;
}

.field input::placeholder {
    color: #94979c;
}

/* Trees */
.tree {
    flex: 1;
    padding: 4px 4px 0 2px;
    border-radius: 3px;
    background-color: #21262e;
}

.tree li {
    display: flex;
    height: 29px;
}

.fold {
    align-self: center;
    color: #7c8087;
}

.indent {
    padding-left: 16px;
}

.item {
    display: flex;
    flex: 1;
    align-items: center;
    gap: 6px;
    min-width: 0;
    padding: 0 0 2px 2px;
    white-space: nowrap;
}

.selected {
    padding-left: 3px;
    border: 1px solid #7a8490;
    border-radius: 2px;
    background-color: #385068;
    color: #f0f1f2;
}

.child {
    padding-left: 4px;
}

.guide {
    flex: none;
    width: 19px;
    height: 15px;
    margin-left: 7px;
    border-bottom: 2px solid #a0a2a5;
    border-left: 2px solid #a0a2a5;
}

.guide.through {
    height: 29px;
    border-bottom: 0;
    background: linear-gradient(#3a3f48, #3a3f48) 2px 14px / 15px 1px no-repeat;
}

.folder {
    color: #86b5de;
}

.thumb {
    border-radius: 2px;
    background-color: #363d52;
}

/* Scene editor */
.editor {
    display: flex;
    flex: 1;
    flex-direction: column;
    min-height: 0;
    background-color: #363d4a;
}

.scene-tab {
    display: flex;
    align-items: center;
    gap: 4px;
}

.scene-tab .x {
    margin-left: 6px;
}

.new-tab {
    padding: 0 10px;
}

.new-tab .icon {
    color: #7c8087;
}

.expand {
    padding-right: 6px;
}

.expand .icon {
    color: #e0e0e0;
}

.tools {
    display: flex;
    flex: none;
    gap: 4px;
    height: 39px;
    padding: 4px;
}

.tools i {
    width: 4px;
    background: linear-gradient(#4d535f, #4d535f) 1px 0 / 1px 100% no-repeat;
}

.pressed {
    border-radius: 3px;
    background-color: #21262e;
}

.pressed .icon {
    color: #70bafa;
}

.view {
    padding: 0 6px 2px;
}

.viewport {
    position: relative;
    flex: 1;
    min-height: 0;
    border: 2px solid #5283ad;
    background-color: #4d4d4d;
    overflow: hidden;
}

.canvas {
    position: absolute;
    width: 100%;
    height: 100%;
}

.canvas text {
    fill: #9a9da1;
    font-size: 9px;
}

.zoom {
    position: absolute;
    top: 23px;
    left: 24px;
    display: flex;
    align-items: center;
    gap: 12px;
    text-shadow: 0 0 2px #222;
}

.zoom button {
    min-width: 16px;
}

.zoom button:first-child {
    margin-right: 4px;
}

.vscroll,
.hscroll {
    position: absolute;
    border-radius: 3px;
    background-color: #545454;
}

.vscroll {
    top: 19px;
    right: 2px;
    bottom: 12px;
    width: 4px;
}

.hscroll {
    right: 12px;
    bottom: 2px;
    left: 18px;
    height: 4px;
}

.vscroll span,
.hscroll span {
    position: absolute;
    border-radius: 3px;
    background-color: #8a8a8a;
}

.vscroll span {
    top: 23%;
    left: -1px;
    width: 6px;
    height: 32%;
}

.hscroll span {
    top: -1px;
    left: 23%;
    width: 29%;
    height: 6px;
}

.bottom {
    display: flex;
    flex: none;
    align-items: center;
    gap: 4px;
    height: 40px;
    padding: 2px 9px 0 5px;
    border-radius: 3px;
    background-color: #363d4a;
}

.bottom button {
    padding: 0 6px;
}

.version {
    display: flex;
    align-items: center;
    gap: 10px;
    margin-left: auto;
    color: #868a91;
}

.version .icon {
    color: #575d68;
}

/* Inspector */
.inspector .dock-body {
    padding-top: 4px;
}

.short {
    height: 28px;
    padding-top: 2px;
}

.space {
    flex: 1;
}

.object {
    padding: 0 4px;
    border-bottom: 0;
    border-radius: 3px;
}

.object select {
    margin-left: 8px;
    padding-bottom: 2px;
}

.props {
    display: flex;
    flex: 1;
    gap: 3px;
    min-height: 0;
    padding: 4px 7px 4px 4px;
    border-radius: 3px;
    background-color: #21262e;
    overflow: hidden;
}

.props-list {
    flex: 1;
}

.props h2 {
    display: flex;
    align-items: center;
    justify-content: center;
    gap: 6px;
    height: 25px;
    padding-bottom: 3px;
    border-radius: 2px;
    background-color: #41454e;
    font-size: 14px;
    font-weight: 700;
}

.props h2 .icon {
    margin-top: 4px;
}

.prop {
    display: grid;
    grid-template-columns: 1fr 1fr;
}

.prop > label {
    padding: 4px 0 0 8px;
    color: #93969b;
    white-space: nowrap;
}

.value {
    display: flex;
    align-items: center;
    height: 31px;
    padding-right: 2px;
    background-color: #1d2229;
}

.value select {
    flex: 1;
    padding: 0 0 2px 6px;
}

.value input[type="text"] {
    width: 60px;
    padding: 0 0 3px 4px;
}

.vector {
    display: grid;
    gap: 4px;
    background-color: #1d2229;
}

.axis {
    align-self: stretch;
    width: 20px;
    padding-top: 4px;
    border-radius: 3px;
    background-color: #16191f;
    text-align: center;
}

.axis.x {
    color: #96655a;
}

.axis.y {
    color: #4f9468;
}

.check {
    gap: 9px;
    padding: 0 0 2px 7px;
    color: #70bafa;
}

.check input {
    position: relative;
    width: 14px;
    height: 14px;
    border-radius: 2px;
    appearance: none;
    background-color: #70bafa;
}

.check input:checked::after {
    content: "";
    position: absolute;
    top: 3px;
    left: 3px;
    width: 8px;
    height: 5px;
    border-bottom: 2px solid #fff;
    border-left: 2px solid #fff;
    transform: rotate(-45deg);
}

.group {
    display: flex;
    align-items: center;
    width: 100%;
    height: 25px;
    padding-bottom: 3px;
    background-color: #282c35;
    font-weight: 700;
}

.group .icon {
    color: #93969b;
}

.scrollbar {
    width: 6px;
    margin: 3px 0;
    background: linear-gradient(#2e333b, #2e333b) 1px 0 / 4px 100% no-repeat;
}

.scrollbar span {
    display: block;
    height: 87%;
    border-radius: 3px;
    background-color: #6e7176;
}

/* Context menu */
.popup {
    position: absolute;
    top: 198px;
    left: 107px;
    width: 287px;
    padding: 1px 0;
    border: 1px solid #1d2229;
    background-color: #363d4a;
}

.popup button {
    display: flex;
    align-items: center;
    gap: 4px;
    width: 100%;
    height: 28px;
    padding: 0 6px 0 4px;
}

.popup kbd {
    margin-left: auto;
    color: #757a83;
    font: inherit;
}

.popup hr {
    height: 1px;
    margin: 5px 0;
    border: 0;
    background-color: #4d535f;
}

.popup .hover,
.popup .hover kbd {
    background-color: #4d535f;
    color: #e6e7e8;
}
```
